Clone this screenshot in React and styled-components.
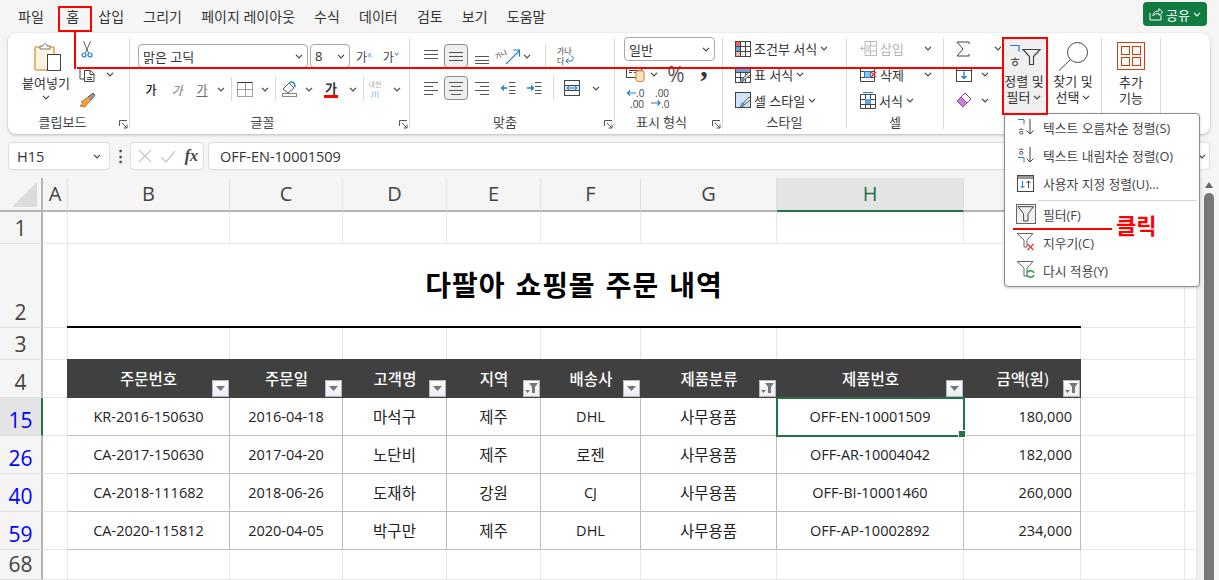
import React from 'react';
import styled, { createGlobalStyle } from 'styled-components';

const Global = createGlobalStyle`
  html, body { margin: 0; padding: 0; background: #f5f5f5; overflow: hidden; }
  body { font-family: "Open Sans", "Noto Sans CJK KR", sans-serif; color: #333; }
  * { box-sizing: border-box; }
`;

const KR = '"Noto Sans CJK KR", sans-serif';
const COLS = ['A', 'B', 'C', 'D', 'E', 'F', 'G', 'H', 'I', '', ''];
const TABS = ['파일', '홈', '삽입', '그리기', '페이지 레이아웃', '수식', '데이터', '검토', '보기', '도움말'];
const HEADERS = [
  { t: '주문번호' }, { t: '주문일' }, { t: '고객명' }, { t: '지역', f: true },
  { t: '배송사' }, { t: '제품분류', f: true }, { t: '제품번호' }, { t: '금액(원)', f: true },
];
const ROWS = [
  { n: 15, c: ['KR-2016-150630', '2016-04-18', '마석구', '제주', 'DHL', '사무용품', 'OFF-EN-10001509', '180,000'] },
  { n: 26, c: ['CA-2017-150630', '2017-04-20', '노단비', '제주', '로젠', '사무용품', 'OFF-AR-10004042', '182,000'] },
  { n: 40, c: ['CA-2018-111682', '2018-06-26', '도재하', '강원', 'CJ', '사무용품', 'OFF-BI-10001460', '260,000'] },
  { n: 59, c: ['CA-2020-115812', '2020-04-05', '박구만', '제주', 'DHL', '사무용품', 'OFF-AP-10002892', '234,000'] },
];

const Page = styled.div`
  position: relative;
  width: 1219px;
  height: 580px;
  overflow: hidden;
  background: #f5f5f5;
`;

const TitleBar = styled.div`
  height: 33px;
  display: flex;
  align-items: center;
  padding: 0 12px 0 18px;
`;
const Tab = styled.div`
  font-size: 14px;
  line-height: 18px;
  margin-right: 19.2px;
  white-space: nowrap;
  &:first-child { margin-right: 22.5px; }
`;
const Share = styled.div`
  margin-left: auto;
  width: 64px;
  height: 24px;
  background: #107c41;
  border-radius: 4px;
  color: #fff;
  display: flex;
  align-items: center;
  justify-content: center;
  gap: 3px;
  font-size: 13px;
  margin-top: -5px;
`;

const Ribbon = styled.div`
  height: 101px;
  margin: 0 9px 0 8px;
  padding: 5px 0 5px;
  background: #fff;
  border-radius: 8px;
  box-shadow: 0 1px 3px rgba(0, 0, 0, 0.25);
  display: flex;
`;
const Group = styled.div`
  position: relative;
  width: ${(p) => p.$w}px;
  flex: none;
  border-right: 1px solid #dcdcdc;
  display: flex;
  flex-direction: column;
`;
const GroupBody = styled.div`
  flex: 1;
  min-height: 0;
  display: flex;
  padding-left: ${(p) => p.$pl || 0}px;
`;
const GroupLabel = styled.div`
  height: 20px;
  margin-bottom: -4px;
  padding-right: ${(p) => p.$pr || 0}px;
  font-size: 13px;
  line-height: 18px;
  text-align: center;
  color: #444;
  font-family: ${KR};
`;
const Launcher = styled.svg`
  position: absolute;
  right: 1px;
  bottom: 0;
`;
const Rows = styled.div`
  display: flex;
  flex-direction: column;
  padding-top: ${(p) => p.$pt || 0}px;
  gap: ${(p) => p.$gap || 0}px;
  margin-top: ${(p) => p.$mt || 0}px;
  width: ${(p) => (p.$w ? `${p.$w}px` : 'auto')};
`;
const Row = styled.div`
  display: flex;
  align-items: center;
  height: ${(p) => p.$h || 24}px;
`;
const Tool = styled.div`
  flex: none;
  display: flex;
  align-items: center;
  justify-content: center;
  width: ${(p) => p.$w}px;
  height: 100%;
  font-size: 12px;
  color: #444;
  font-family: ${KR};
`;
const Pressed = styled(Tool)`
  background: #f0f0f0;
  border: 1px solid #8a8a8a;
  border-radius: 4px;
  height: 24px;
`;
const BoldTool = styled(Tool)`
  font-weight: 500;
  color: #222;
`;
const ItalicTool = styled(Tool)`
  font-style: italic;
  color: #777;
`;
const UnderTool = styled(Tool)`
  text-decoration: underline;
  color: #666;
`;
const ColorLetter = styled.span`
  font-weight: 700;
  font-size: 13px;
  border-bottom: 3px solid #f00;
  line-height: 15px;
  padding: 0 1px;
  color: #333;
`;
const SizeMark = styled.sup`
  color: #1b7fd0;
  font-size: 9px;
  line-height: 9px;
`;
const TextDirection = styled(Tool)`
  flex-direction: column;
  font-size: 7px;
  line-height: 10px;
  color: #aaa;
  padding-right: 6px;
  span { color: #5aa8e0; font-size: 8px; }
`;
const PercentTool = styled(Tool)`
  font-size: 21px;
  font-family: "Open Sans", sans-serif;
  color: #555;
`;
const CommaTool = styled(Tool)`
  font-size: 30px;
  font-family: "Liberation Serif", serif;
  font-weight: 700;
  color: #333;
  padding-bottom: 16px;
`;
const VSep = styled.div`
  flex: none;
  width: 1px;
  height: 24px;
  background: #d8d8d8;
  margin: 0 ${(p) => p.$r || 0}px 0 ${(p) => p.$l || 0}px;
`;
const Combo = styled.div`
  flex: none;
  width: ${(p) => p.$w}px;
  height: 24px;
  margin-right: ${(p) => p.$mr || 0}px;
  border: 1px solid #a8a8a8;
  border-radius: 4px;
  display: flex;
  align-items: center;
  justify-content: space-between;
  padding: 0 4px 0 4px;
  font-size: 13px;
  color: #333;
  background: #fff;
`;
const StyleRow = styled.div`
  height: 26px;
  display: flex;
  align-items: center;
  gap: 3px;
  font-size: 13px;
  white-space: nowrap;
  color: ${(p) => (p.$off ? '#b5b5b5' : '#333')};
`;
const Gap = styled.span`
  flex: none;
  width: ${(p) => p.$w}px;
`;
const Big = styled.div`
  flex: none;
  width: ${(p) => p.$w}px;
  height: 77px;
  margin-top: -1px;
  background: ${(p) => (p.$on ? '#f0f0f0' : 'transparent')};
  display: flex;
  flex-direction: column;
  align-items: center;
  font-size: 13px;
  line-height: 16px;
  text-align: center;
  color: #333;
  padding-top: ${(p) => p.$pt || 0}px;
`;
const BigIcon = styled.div`
  height: ${(p) => p.$h}px;
  flex: none;
  padding-left: ${(p) => p.$pl || 0}px;
`;
const BigLine = styled.div`
  display: flex;
  align-items: center;
  gap: 3px;
  white-space: nowrap;
  margin-top: ${(p) => p.$mt || 0}px;
`;

const FormulaBar = styled.div`
  margin: 8px 9px 8px 8px;
  height: 28px;
  display: flex;
  align-items: stretch;
`;
const FieldBox = styled.div`
  background: #fff;
  border: 1px solid #dedede;
  border-radius: 4px;
  display: flex;
  align-items: center;
  flex: ${(p) => (p.$w ? 'none' : 1)};
  width: ${(p) => (p.$w ? `${p.$w}px` : 'auto')};
  margin-left: ${(p) => p.$ml || 0}px;
  padding: 0 ${(p) => p.$pr || 8}px 0 ${(p) => p.$pl || 8}px;
  justify-content: space-between;
  font-size: 14.5px;
  color: #333;
`;
const Dots = styled.div`
  width: 20px;
  flex: none;
  text-align: center;
  font-weight: 700;
  font-size: 15px;
  line-height: 26px;
  color: #444;
`;
const FxMark = styled.span`
  font-family: "Liberation Serif", serif;
  font-style: italic;
  font-weight: 700;
  font-size: 16px;
  color: #444;
`;

const SheetWrap = styled.div`
  display: flex;
  height: 402px;
`;
const Sheet = styled.div`
  display: grid;
  width: 1197px;
  flex: none;
  background: #fff;
  grid-template-columns: 43px 25px 162px 113px 104px 94px 100px 136px 187px 117px 104px 12px;
  grid-template-rows: 34px 32px 84px 32px 38px 38px 38px 38px 38px 30px;
`;
const Corner = styled.div`
  background: #f5f5f5;
  border-right: 2px solid #b4b4b4;
  border-bottom: 2px solid #b4b4b4;
  padding: 4px 4px 0 12px;
`;
const ColHead = styled.div`
  background: ${(p) => (p.$on ? '#e4e4e4' : '#f5f5f5')};
  border-right: 1px solid #e0e0e0;
  border-bottom: 2px solid ${(p) => (p.$on ? '#217346' : '#b4b4b4')};
  color: ${(p) => (p.$on ? '#217346' : '#444')};
  font-size: 20px;
  line-height: 32px;
  text-align: center;
`;
const RowHead = styled.div`
  background: ${(p) => (p.$on ? '#e4e4e4' : '#f5f5f5')};
  border-right: 2px solid ${(p) => (p.$on ? '#217346' : '#b4b4b4')};
  border-bottom: 1px solid #e0e0e0;
  color: ${(p) => (p.$blue ? '#0000ff' : '#444')};
  font-size: 21px;
  line-height: 24px;
  text-align: center;
  display: flex;
  align-items: flex-end;
  justify-content: center;
  padding-bottom: 3px;
  overflow: visible;
`;
const Cell = styled.div`
  border-right: 1px solid #e6e6e6;
  border-bottom: 1px solid #e6e6e6;
`;
const TitleCell = styled.div`
  grid-column: span 8;
  border-bottom: 2px solid #000;
  margin-left: -1px;
  font-family: ${KR};
  font-size: 28px;
  font-weight: 700;
  color: #000;
  word-spacing: 3px;
  letter-spacing: 0.9px;
  display: flex;
  align-items: center;
  justify-content: center;
  padding-bottom: 3px;
`;
const HeadCell = styled.div`
  position: relative;
  background: #404040;
  color: #fff;
  font-size: 15.5px;
  font-weight: 500;
  margin-top: -1px;
  margin-left: ${(p) => (p.$first ? -1 : 0)}px;
  display: flex;
  align-items: center;
  justify-content: center;
`;
const FilterBtn = styled.div`
  position: absolute;
  right: 1px;
  bottom: 1px;
  width: 17px;
  height: 17px;
  background: linear-gradient(#fff, #e9edf5);
  border: 1px solid #b8b8b8;
  display: flex;
  align-items: center;
  justify-content: center;
`;
const DataCell = styled.div`
  position: relative;
  border-right: 1px solid #bdbdbd;
  border-bottom: 1px solid #bdbdbd;
  color: #222;
  font-size: ${(p) => (p.$kr ? 15.5 : 14.5)}px;
  display: flex;
  align-items: center;
  justify-content: ${(p) => (p.$right ? 'flex-end' : 'center')};
  padding-right: ${(p) => (p.$right ? 8 : 0)}px;
  padding-bottom: 1px;
  ${(p) => p.$selected && `
    outline: 2px solid #217346;
    outline-offset: -1px;
    z-index: 2;
    &::after {
      content: '';
      position: absolute;
      right: -3px;
      bottom: -3px;
      width: 6px;
      height: 6px;
      background: #217346;
      border: 1px solid #fff;
    }
  `}
`;

const Scrollbar = styled.div`
  flex: 1;
  background: #f5f5f5;
  border-left: 7px solid #f0f0f0;
  padding-right: 5px;
  display: flex;
  flex-direction: column;
  align-items: center;
`;
const ScrollUp = styled.div`
  width: 0;
  height: 0;
  margin-top: 4px;
  border-left: 4px solid transparent;
  border-right: 4px solid transparent;
  border-bottom: 6px solid #666;
`;
const ScrollThumb = styled.div`
  width: 10px;
  flex: 1;
  margin-top: 5px;
  background: #777;
  border-radius: 5px 5px 0 0;
`;

const Menu = styled.div`
  position: absolute;
  left: 1004px;
  top: 113px;
  width: 196px;
  height: 174px;
  background: #fff;
  border: 1px solid #8c8c8c;
  border-radius: 4px;
  box-shadow: 0 1px 3px rgba(0, 0, 0, 0.2);
  z-index: 5;
`;
const MenuItem = styled.div`
  height: 28px;
  padding-bottom: 2px;
  display: flex;
  align-items: center;
  font-size: 12.8px;
  color: #444;
  white-space: nowrap;
`;
const MenuIcon = styled.div`
  width: 38px;
  flex: none;
  padding-left: 3px;
  display: flex;
  align-items: center;
  justify-content: center;
`;
const MenuSep = styled.div`
  height: 1px;
  margin: 2px 2px 0 33px;
  background: #d4d4d4;
`;
const FilterBox = styled.div`
  width: 20px;
  height: 20px;
  background: #f0f0f0;
  border: 1px solid #666;
  display: flex;
  align-items: center;
  justify-content: center;
`;

const HomeMark = styled.div`
  position: absolute;
  left: 58px;
  top: 6px;
  width: 34px;
  height: 26px;
  border: 2px solid #f00;
  z-index: 6;
`;
const LeaderV = styled.div`
  position: absolute;
  left: 74px;
  top: 31px;
  width: 2px;
  height: 38px;
  background: #f00;
  z-index: 6;
`;
const LeaderH = styled.div`
  position: absolute;
  left: 77px;
  top: 67px;
  width: 927px;
  height: 2px;
  background: #f00;
  z-index: 6;
`;
const SortMark = styled.div`
  position: absolute;
  left: 1002px;
  top: 37px;
  width: 46px;
  height: 78px;
  border: 2px solid #f00;
  z-index: 6;
`;
const ClickLine = styled.div`
  position: absolute;
  left: 1013px;
  top: 228px;
  width: 99px;
  height: 2px;
  background: #f00;
  z-index: 6;
`;
const ClickText = styled.div`
  position: absolute;
  left: 1116px;
  top: 209px;
  font-family: ${KR};
  font-size: 22px;
  font-weight: 700;
  line-height: 30px;
  color: #f00;
  z-index: 6;
`;

const Chev = ({ c = '#444' }) => (
  <svg width="8" height="5" viewBox="0 0 8 5" fill="none">
    <path d="M1 .8l3 3 3-3" stroke={c} strokeWidth="1.2" />
  </svg>
);
const Launch = () => (
  <Launcher width="9" height="9" viewBox="0 0 9 9" fill="none">
    <path d="M.5 6V.5H8M3 3l5 5M8 4.500V8H4.500" stroke="#555" />
  </Launcher>
);
const Ico = ({ w = 16, h = 16, children }) => (
  <svg width={w} height={h} viewBox={`0 0 ${w} ${h}`} fill="none" overflow="visible">
    {children}
  </svg>
);
const Lines = ({ ys, xs }) => (
  <Ico w={16} h={16}>
    {ys.map((y, i) => (
      <path key={i} d={`M${xs[i][0]} ${y + 0.5}H${xs[i][1]}`} stroke="#555" />
    ))}
  </Ico>
);
const Hangul = ({ x, y, s = 10, c = '#444', children }) => (
  <text x={x} y={y} fontSize={s} fill={c} fontFamily='"Noto Sans CJK KR", sans-serif'>
    {children}
  </text>
);

const PasteIcon = () => (
  <Ico w={28} h={30}>
    <rect x="1" y="5" width="19" height="23" rx="1" fill="#fdf3e0" stroke="#e2a24a" strokeWidth="1.5" />
    <path d="M6 7V4h3c0-3 4-3 4 0h3v3z" fill="#fff" stroke="#777" />
    <rect x="13.500" y="12.500" width="13" height="16" fill="#fff" stroke="#444" />
  </Ico>
);
const ScissorsIcon = () => (
  <Ico w={12} h={17}>
    <path d="M2.500 0l5 12M9.500 0l-5 12" stroke="#666" />
    <circle cx="3" cy="14" r="2" stroke="#1b7fd0" strokeWidth="1.2" />
    <circle cx="9" cy="14" r="2" stroke="#1b7fd0" strokeWidth="1.2" />
  </Ico>
);
const CopyIcon = () => (
  <Ico w={17} h={15}>
    <path d="M3 1H1v11h4" stroke="#444" />
    <path d="M5.500 3.500h6l3.500 3.500v7.500H5.500zM11 3.500v4h4M8 10.500h5M8 12.500h5" stroke="#444" />
  </Ico>
);
const BrushIcon = () => (
  <Ico w={16} h={16}>
    <path d="M9 5l3 3-3 3-3 4-5-1 3-3-2-1 3-2z" fill="#f0a040" stroke="#c87a20" />
    <path d="M9 5l5-4 2 2-4 5" fill="#999" stroke="#555" />
  </Ico>
);
const BorderIcon = () => (
  <Ico w={16} h={16}>
    <path d="M.5 1.500h15" stroke="#333" />
    <path d="M.5 8.500h15M8.500 1.500v14M.5 1.500v14M15.500 1.500v14M.5 15.500h15" stroke="#444" strokeDasharray="1 1" />
  </Ico>
);
const FillIcon = () => (
  <Ico w={18} h={18}>
    <path d="M2 9l6-6 5 5-6 5z" fill="#fff" stroke="#555" />
    <path d="M8 4c2-4 6-2 6 3" stroke="#1b7fd0" strokeWidth="1.4" />
    <rect x="1.500" y="13.500" width="14" height="3" fill="#fff" stroke="#888" />
  </Ico>
);
const OrientIcon = () => (
  <Ico w={26} h={22}>
    <g transform="rotate(-28 8 12)">
      <Hangul x="0" y="11" s={7}>가나</Hangul>
    </g>
    <path d="M10 19L23 6M17 5h6.500v6.500" stroke="#1b7fd0" strokeWidth="1.2" />
  </Ico>
);
const WrapIcon = () => (
  <Ico w={20} h={24}>
    <Hangul x="1" y="10" s={8}>가나</Hangul>
    <Hangul x="1" y="20" s={8}>다</Hangul>
    <path d="M10 17h5c3 0 3-5 0-5M10 17l2.500-2.500M10 17l2.500 2.500" stroke="#1b7fd0" />
  </Ico>
);
const IndentIcon = ({ flip }) => (
  <Ico w={16} h={14}>
    <path d="M9 1.500h6.500M9 5.500h6.500M9 9.500h6.500M9 12.500h6.500" stroke="#555" />
    {flip
      ? <path d="M1 7h6M5 4.500L7.500 7 5 9.500" stroke="#1b7fd0" strokeWidth="1.3" />
      : <path d="M1.500 7h6M4 4.500L1.500 7 4 9.500" stroke="#1b7fd0" strokeWidth="1.3" />}
  </Ico>
);
const MergeIcon = () => (
  <Ico w={16} h={16}>
    <rect x=".5" y=".5" width="15" height="15" stroke="#444" />
    <rect x="1" y="5" width="14" height="6" fill="#d6ecfb" />
    <path d="M.5 5.500h15M.5 10.500h15" stroke="#444" />
    <path d="M3 8h10M5 6l-2 2 2 2M11 6l2 2-2 2" stroke="#1b7fd0" />
  </Ico>
);
const AccountingIcon = () => (
  <Ico w={20} h={16}>
    <rect x=".5" y="1.500" width="15" height="10" fill="#fff" stroke="#444" />
    <path d="M3 4.500h9M3 6.500h3M8 6.500h4" stroke="#444" />
    <ellipse cx="14" cy="6" rx="4" ry="1.500" fill="#f9c88c" stroke="#d87a1a" />
    <path d="M10 6v8c0 2 8 2 8 0V6" fill="#fde3c4" stroke="#d87a1a" />
  </Ico>
);
const DecIcon = ({ more }) => (
  <Ico w={22} h={24}>
    {more ? (
      <>
        <text x="5" y="9" fontSize="10" fill="#444" fontFamily="Open Sans">.00</text>
        <text x="11" y="20" fontSize="10" fill="#444" fontFamily="Open Sans">.0</text>
        <path d="M1 15h9M7.500 12.500L10 15l-2.500 2.500" stroke="#1b7fd0" strokeWidth="1.2" />
      </>
    ) : (
      <>
        <text x="10" y="9" fontSize="10" fill="#444" fontFamily="Open Sans">.0</text>
        <text x="4" y="20" fontSize="10" fill="#444" fontFamily="Open Sans">.00</text>
        <path d="M10 5H1.500M4 2.500L1.500 5 4 7.500" stroke="#1b7fd0" strokeWidth="1.2" />
      </>
    )}
  </Ico>
);
const CondIcon = () => (
  <Ico w={16} h={16}>
    <rect x=".5" y=".5" width="15" height="15" fill="#fff" stroke="#444" />
    <rect x="1" y="1" width="5" height="4" fill="#e86a6a" />
    <rect x="1" y="6" width="5" height="4" fill="#5aa8e0" />
    <rect x="1" y="11" width="5" height="4" fill="#f4b0b0" />
    <path d="M5.500 .5v15M10.500 .5v15M.5 5.500h15M.5 10.500h15" stroke="#444" />
  </Ico>
);
const TableIcon = ({ cell }) => (
  <Ico w={16} h={16}>
    <rect x=".5" y=".5" width="15" height="15" fill={cell ? '#cfe4f6' : '#fff'} stroke="#444" />
    {!cell && <path d="M.5 5.500h15M.5 10.500h15M5.500 .5v15M10.500 .5v15" stroke="#444" />}
    {!cell && <rect x="1" y="1" width="14" height="4" fill="#5aa8e0" />}
    <path d="M5 15l9-10 2 2-9 8z" fill="#fff" stroke="#444" />
    <path d="M5 15l2-5 3 2z" fill="#4a90d0" />
  </Ico>
);
const InsertIcon = () => (
  <Ico w={17} h={15}>
    <path d="M.5 7.500h5M3 5L.5 7.500 3 10" stroke="#bbb" />
    <path d="M5 .5h11.500v14H5zM5 5h11.500M5 10h11.500M10.500 .5v14" stroke="#bbb" />
    <rect x="5" y="5" width="5.500" height="5" fill="#ddd" />
  </Ico>
);
const DeleteIcon = () => (
  <Ico w={17} h={15}>
    <path d="M.5 .5h14v14H.5zM.5 4.500h14M.5 10.500h14" stroke="#444" />
    <rect x="4.500" y="4.500" width="6" height="6" fill="#8cc3ec" stroke="#1b7fd0" />
    <path d="M11 5l5 5M16 5l-5 5" stroke="#e23a3a" strokeWidth="1.4" />
  </Ico>
);
const FormatIcon = () => (
  <Ico w={16} h={18}>
    <path d="M.5 3.500h15v14H.5zM.5 8.500h15M.5 13.500h15M5.500 3.500v14M10.500 3.500v14" stroke="#444" />
    <rect x="5" y="8" width="6" height="5" fill="#5aa8e0" />
    <path d="M3 1.500h10" stroke="#1b7fd0" />
  </Ico>
);
const SigmaIcon = () => (
  <Ico w={14} h={16}>
    <path d="M13 3V1H1l6 7-6 7h12v-2" stroke="#444" strokeWidth="1" />
  </Ico>
);
const FillDownIcon = () => (
  <Ico w={16} h={14}>
    <rect x=".5" y=".5" width="15" height="13" fill="#fff" stroke="#444" />
    <path d="M.5 2.500h15" stroke="#444" />
    <path d="M8 3.500v7M5.500 8L8 10.500 10.500 8" stroke="#1b7fd0" strokeWidth="1.3" />
  </Ico>
);
const EraserIcon = () => (
  <Ico w={16} h={16}>
    <path d="M1 9l8-8 6 6-8 8z" fill="#fff" stroke="#a040b0" />
    <path d="M1 9l4-4 6 6-4 4z" fill="#c880d4" stroke="#a040b0" />
  </Ico>
);
const Funnel = ({ s = 1, c = '#444', fill = 'none', sw = 1 }) => (
  <svg width={16 * s} height={16 * s} viewBox="0 0 16 16" fill={fill}>
    <path d="M1 1.500h14L10 8v6.500H6V8z" stroke={c} strokeWidth={sw / s} />
  </svg>
);
const SortFilterIcon = () => (
  <Ico w={32} h={24}>
    <path d="M2 2.500h9v6" stroke="#1b7fd0" strokeWidth="1.2" />
    <Hangul x="1" y="23" s={13}>ㅎ</Hangul>
    <path d="M15 6.500h17l-6.500 7v8h-4v-8z" stroke="#444" strokeWidth="1.2" />
  </Ico>
);
const FindIcon = () => (
  <Ico w={30} h={29}>
    <circle cx="19.500" cy="10.500" r="10" stroke="#444" />
    <path d="M12.500 17.500L1 28.500" stroke="#444" />
  </Ico>
);
const AddinIcon = () => (
  <Ico w={28} h={28}>
    <rect x=".5" y=".5" width="27" height="27" stroke="#d83b01" />
    <rect x="4.500" y="4.500" width="8" height="8" stroke="#d83b01" />
    <rect x="15.500" y="4.500" width="8" height="8" stroke="#d83b01" />
    <rect x="4.500" y="15.500" width="8" height="8" stroke="#d83b01" />
    <rect x="15.500" y="15.500" width="8" height="8" stroke="#d83b01" />
  </Ico>
);
const SortAscIcon = ({ desc }) => (
  <Ico w={18} h={20}>
    {desc ? (
      <>
        <Hangul x="0" y="10" s={9}>ㅎ</Hangul>
        <path d="M1 12.500h6v5" stroke="#1b7fd0" />
      </>
    ) : (
      <>
        <path d="M1 2.500h6v5" stroke="#1b7fd0" />
        <Hangul x="0" y="18" s={9}>ㅎ</Hangul>
      </>
    )}
    <path d="M13 2v15M9.500 13.500L13 17l3.500-3.500" stroke="#444" />
  </Ico>
);
const CustomSortIcon = () => (
  <Ico w={18} h={17}>
    <rect x=".5" y=".5" width="16" height="16" fill="#fff" stroke="#444" />
    <rect x="1" y="1" width="15" height="3" fill="#999" />
    <path d="M5.500 6v7M3.500 11l2 2 2-2" stroke="#1b7fd0" />
    <path d="M11.500 13V6M9.500 8l2-2 2 2" stroke="#444" />
  </Ico>
);
const ClearFilterIcon = () => (
  <Ico w={20} h={20}>
    <path d="M1 1.500h16L11 8v7H8V8z" stroke="#666" />
    <path d="M11.500 12l6 6M17.500 12l-6 6" stroke="#e23a3a" strokeWidth="1.3" />
  </Ico>
);
const ReapplyIcon = () => (
  <Ico w={20} h={20}>
    <path d="M1 1.500h16L11 8v8H8V8z" stroke="#666" />
    <path d="M11 13c1-3 6-3 7 0M18 15c-1 3-6 3-7 0" stroke="#2a9d4a" strokeWidth="1.4" />
  </Ico>
);
const ShareIcon = () => (
  <Ico w={14} h={14}>
    <path d="M1 6v7h11V8M4 9c0-4 3-5 6-5V1.500L13.500 5 10 8.500V6.500C7.500 6.500 5.500 7 4 9z" stroke="#fff" />
  </Ico>
);
const CrossIcon = () => (
  <Ico w={14} h={14}><path d="M1 1l12 12M13 1L1 13" stroke="#c6c6c6" strokeWidth="1.2" /></Ico>
);
const CheckIcon = () => (
  <Ico w={16} h={14}><path d="M1 8l5 5L15 2" stroke="#c6c6c6" strokeWidth="1.2" /></Ico>
);
const CornerMark = () => (
  <Ico w={26} h={25}><path d="M25 0v25H0z" fill="#dcdcdc" /></Ico>
);

const Fill = ({ n }) => Array.from({ length: n }, (_, i) => <Cell key={i} />);

function RibbonBar() {
  return (
    <Ribbon>
      <Group $w={122}>
        <GroupBody $pl={12}>
          <Big $w={52} $pt={5}>
            <BigIcon $h={33} $pl={4}><PasteIcon /></BigIcon>
            <BigLine>붙여넣기</BigLine>
            <BigLine $mt={4}><Chev /></BigLine>
          </Big>
          <Rows $mt={-1}>
            <Row $h={26}><Tool $w={30}><ScissorsIcon /></Tool></Row>
            <Row $h={26}><Tool $w={30}><CopyIcon /></Tool><Tool $w={16}><Chev /></Tool></Row>
            <Row $h={26}><Tool $w={30}><BrushIcon /></Tool></Row>
          </Rows>
        </GroupBody>
        <GroupLabel $pr={12}>클립보드</GroupLabel>
        <Launch />
      </Group>

      <Group $w={280}>
        <GroupBody $pl={8}>
          <Rows $pt={6} $gap={9}>
            <Row>
              <Combo $w={170} $mr={2}><span>맑은 고딕</span><Chev /></Combo>
              <Combo $w={40}><span>8</span><Chev /></Combo>
              <Tool $w={28}>가<SizeMark>^</SizeMark></Tool>
              <Tool $w={26}>가<SizeMark>ˇ</SizeMark></Tool>
            </Row>
            <Row>
              <BoldTool $w={26}>가</BoldTool>
              <ItalicTool $w={26}>가</ItalicTool>
              <UnderTool $w={24}>가</UnderTool>
              <Tool $w={14}><Chev /></Tool>
              <VSep $l={3} />
              <Tool $w={26}><BorderIcon /></Tool>
              <Tool $w={14}><Chev /></Tool>
              <VSep $l={3} />
              <Tool $w={28}><FillIcon /></Tool>
              <Tool $w={10}><Chev /></Tool>
              <Tool $w={34}><ColorLetter>가</ColorLetter></Tool>
              <Tool $w={10}><Chev /></Tool>
              <VSep $l={5} />
              <TextDirection $w={28}>내천<span>川</span></TextDirection>
              <Tool $w={10}><Chev /></Tool>
            </Row>
          </Rows>
        </GroupBody>
        <GroupLabel $pr={14}>글꼴</GroupLabel>
        <Launch />
      </Group>

      <Group $w={205}>
        <GroupBody $pl={8}>
          <Rows $pt={6} $gap={8}>
            <Row>
              <Tool $w={26}><Lines ys={[2, 6, 10]} xs={[[1, 15], [1, 15], [1, 15]]} /></Tool>
              <Pressed $w={24}><Lines ys={[4, 8, 12]} xs={[[1, 15], [1, 15], [1, 15]]} /></Pressed>
              <Tool $w={28}><Lines ys={[8, 12, 15]} xs={[[1, 15], [1, 15], [1, 15]]} /></Tool>
              <Tool $w={26}><OrientIcon /></Tool>
              <Tool $w={10}><Chev /></Tool>
              <VSep $l={13} $r={10} />
              <Tool $w={20}><WrapIcon /></Tool>
            </Row>
            <Row>
              <Tool $w={26}><Lines ys={[2, 6, 10, 14]} xs={[[1, 15], [1, 10], [1, 15], [1, 10]]} /></Tool>
              <Pressed $w={24}><Lines ys={[2, 6, 10, 14]} xs={[[1, 15], [3, 13], [1, 15], [3, 13]]} /></Pressed>
              <Tool $w={28}><Lines ys={[2, 6, 10, 14]} xs={[[1, 15], [6, 15], [1, 15], [6, 15]]} /></Tool>
              <Tool $w={24}><IndentIcon /></Tool>
              <Tool $w={28}><IndentIcon flip /></Tool>
              <VSep $l={5} $r={8} />
              <Tool $w={20}><MergeIcon /></Tool>
              <Tool $w={28}><Chev /></Tool>
            </Row>
          </Rows>
        </GroupBody>
        <GroupLabel $pr={14}>맞춤</GroupLabel>
        <Launch />
      </Group>

      <Group $w={108}>
        <GroupBody $pl={9}>
          <Rows $mt={-1}>
            <Combo $w={91}><span>일반</span><Chev /></Combo>
            <Row $h={26}>
              <Tool $w={24}><AccountingIcon /></Tool>
              <Tool $w={12}><Chev /></Tool>
              <PercentTool $w={32}>%</PercentTool>
              <CommaTool $w={24}>,</CommaTool>
            </Row>
            <Row $h={26}>
              <Tool $w={26}><DecIcon /></Tool>
              <Tool $w={22}><DecIcon more /></Tool>
            </Row>
          </Rows>
        </GroupBody>
        <GroupLabel $pr={14}>표시 형식</GroupLabel>
        <Launch />
      </Group>

      <Group $w={124}>
        <GroupBody $pl={12}>
          <Rows $mt={-2}>
            <StyleRow><CondIcon /><span>조건부 서식</span><Chev /></StyleRow>
            <StyleRow><TableIcon /><span>표 서식</span><Chev /></StyleRow>
            <StyleRow><TableIcon cell /><span>셀 스타일</span><Chev /></StyleRow>
          </Rows>
        </GroupBody>
        <GroupLabel>스타일</GroupLabel>
      </Group>

      <Group $w={97}>
        <GroupBody $pl={13}>
          <Rows $mt={-2}>
            <StyleRow $off><InsertIcon /><Gap $w={41}>삽입</Gap><Chev /></StyleRow>
            <StyleRow><DeleteIcon /><Gap $w={41}>삭제</Gap><Chev /></StyleRow>
            <StyleRow><FormatIcon /><span>서식</span><Chev /></StyleRow>
          </Rows>
        </GroupBody>
        <GroupLabel>셀</GroupLabel>
      </Group>

      <Group $w={158}>
        <GroupBody $pl={12}>
          <Rows $mt={-2} $w={48}>
            <StyleRow><SigmaIcon /><Gap $w={18} /><Chev /></StyleRow>
            <StyleRow><FillDownIcon /><Gap $w={3} /><Chev /></StyleRow>
            <StyleRow><EraserIcon /><Gap $w={3} /><Chev /></StyleRow>
          </Rows>
          <Big $w={42} $on $pt={6}>
            <BigIcon $h={30}><SortFilterIcon /></BigIcon>
            <BigLine>정렬 및</BigLine>
            <BigLine>필터 <Chev /></BigLine>
          </Big>
          <Big $w={56} $pt={5}>
            <BigIcon $h={31}><FindIcon /></BigIcon>
            <BigLine>찾기 및</BigLine>
            <BigLine>선택 <Chev /></BigLine>
          </Big>
        </GroupBody>
        <GroupLabel />
      </Group>

      <Group $w={59}>
        <GroupBody>
          <Big $w={58} $pt={5}>
            <BigIcon $h={32}><AddinIcon /></BigIcon>
            <BigLine>추가</BigLine>
            <BigLine>기능</BigLine>
          </Big>
        </GroupBody>
        <GroupLabel />
      </Group>
    </Ribbon>
  );
}

function SortMenu() {
  return (
    <Menu>
      <MenuItem><MenuIcon><SortAscIcon /></MenuIcon>텍스트 오름차순 정렬(S)</MenuItem>
      <MenuItem><MenuIcon><SortAscIcon desc /></MenuIcon>텍스트 내림차순 정렬(O)</MenuItem>
      <MenuItem><MenuIcon><CustomSortIcon /></MenuIcon>사용자 지정 정렬(U)...</MenuItem>
      <MenuSep />
      <MenuItem><MenuIcon><FilterBox><Funnel s={1.1} /></FilterBox></MenuIcon>필터(F)</MenuItem>
      <MenuItem><MenuIcon><ClearFilterIcon /></MenuIcon>지우기(C)</MenuItem>
      <MenuItem><MenuIcon><ReapplyIcon /></MenuIcon>다시 적용(Y)</MenuItem>
    </Menu>
  );
}

function Grid() {
  return (
    <Sheet>
      <Corner><CornerMark /></Corner>
      {COLS.map((c, i) => <ColHead key={i} $on={c === 'H'}>{c}</ColHead>)}

      <RowHead>1</RowHead>
      <Fill n={11} />

      <RowHead>2</RowHead>
      <Cell />
      <TitleCell>다팔아 쇼핑몰 주문 내역</TitleCell>
      <Fill n={2} />

      <RowHead>3</RowHead>
      <Fill n={11} />

      <RowHead>4</RowHead>
      <Cell />
      {HEADERS.map((h, i) => (
        <HeadCell key={h.t} $first={i === 0}>
          {h.t}
          <FilterBtn>
            {h.f ? (
              <svg width="13" height="11" viewBox="0 0 13 11">
                <path d="M4 0h9L10 4v6H7V4z" fill="#777" />
                <path d="M0 7h5L2.500 10z" fill="#777" />
              </svg>
            ) : (
              <svg width="9" height="5" viewBox="0 0 9 5"><path d="M0 0h9L4.500 5z" fill="#777" /></svg>
            )}
          </FilterBtn>
        </HeadCell>
      ))}
      <Fill n={2} />

      {ROWS.map((r, ri) => (
        <React.Fragment key={r.n}>
          <RowHead $blue $on={ri === 0}>{r.n}</RowHead>
          <Cell />
          {r.c.map((v, i) => (
            <DataCell key={i} $kr={/[가-힣]/.test(v)} $right={i === 7} $selected={ri === 0 && i === 6}>{v}</DataCell>
          ))}
          <Fill n={2} />
        </React.Fragment>
      ))}

      <RowHead>68</RowHead>
      <Fill n={11} />
    </Sheet>
  );
}

export default function App() {
  return (
    <Page>
      <Global />
      <TitleBar>
        {TABS.map((t) => <Tab key={t}>{t}</Tab>)}
        <Share><ShareIcon />공유 <Chev c="#fff" /></Share>
      </TitleBar>
      <RibbonBar />
      <FormulaBar>
        <FieldBox $w={102}>H15<Chev /></FieldBox>
        <Dots>⋮</Dots>
        <FieldBox $w={74} $pl={7} $pr={5}><CrossIcon /><CheckIcon /><FxMark>fx</FxMark></FieldBox>
        <FieldBox $ml={4} $pl={11} $pr={3}>OFF-EN-10001509<Chev /></FieldBox>
      </FormulaBar>
      <SheetWrap>
        <Grid />
        <Scrollbar><ScrollUp /><ScrollThumb /></Scrollbar>
      </SheetWrap>
      <SortMenu />
      <HomeMark />
      <LeaderV />
      <LeaderH />
      <SortMark />
      <ClickLine />
      <ClickText>클릭</ClickText>
    </Page>
  );
}
